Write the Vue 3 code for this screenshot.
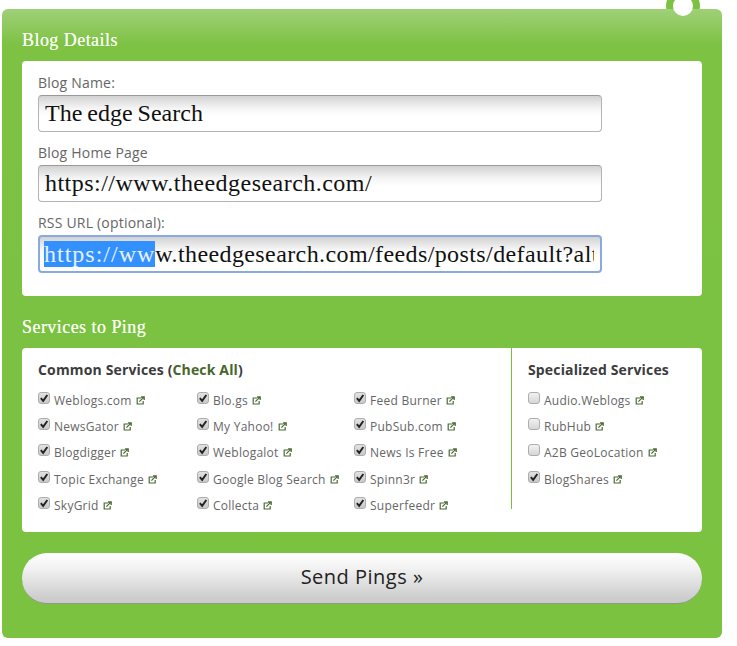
<script setup>
const fields = [
  { label: 'Blog Name:', value: 'The edge Search', tight: true },
  { label: 'Blog Home Page', value: 'https://www.theedgesearch.com/' },
  { label: 'RSS URL (optional):', selected: 'https://ww', value: 'w.theedgesearch.com/feeds/posts/default?alt=rss', focus: true }
]
const columns = [
  ['Weblogs.com', 'NewsGator', 'Blogdigger', 'Topic Exchange', 'SkyGrid'],
  ['Blo.gs', 'My Yahoo!', 'Weblogalot', 'Google Blog Search', 'Collecta'],
  ['Feed Burner', 'PubSub.com', 'News Is Free', 'Spinn3r', 'Superfeedr']
]
const special = [
  { name: 'Audio.Weblogs', on: false },
  { name: 'RubHub', on: false },
  { name: 'A2B GeoLocation', on: false },
  { name: 'BlogShares', on: true }
]
</script>

<template>
  <div class="page">
    <div class="panel">
      <div class="ring"></div>
      <div class="hole"></div>
      <h2 class="title">Blog Details</h2>
      <section class="card details">
        <div v-for="f in fields" :key="f.label" class="field">
          <div class="label">{{ f.label }}</div>
          <div class="input" :class="{ focus: f.focus, tight: f.tight }"><span class="value"><span v-if="f.selected" class="sel">{{ f.selected }}</span>{{ f.value }}</span></div>
        </div>
      </section>
      <h2 class="title">Services to Ping</h2>
      <section class="card services">
        <div class="common">
          <h3 class="sub">Common Services (<span class="check-all">Check All</span>)</h3>
          <div class="grid">
            <div v-for="(col, i) in columns" :key="i" class="col">
              <div v-for="name in col" :key="name" class="item">
                <span class="box"><svg viewBox="0 0 12 12" width="10" height="10"><path d="M2.2 6.2 L5 9.4 L10 2.4" fill="none" stroke="#222" stroke-width="2.3"/></svg></span>
                <span class="name">{{ name }}</span>
                <svg class="ext" viewBox="0 0 9 9" width="9" height="9"><path d="M5 2H1.2V8H7.2V5" fill="none" stroke="#4d6b35" stroke-width="1.2"/><path d="M3.4 5.6 L7.6 1.4 M5 1H8.2V4" fill="none" stroke="#4d6b35" stroke-width="1.3"/></svg>
              </div>
            </div>
          </div>
        </div>
        <div class="specialized">
          <h3 class="sub">Specialized Services</h3>
          <div class="col">
            <div v-for="s in special" :key="s.name" class="item">
              <span class="box" :class="{ off: !s.on }"><svg v-if="s.on" viewBox="0 0 12 12" width="10" height="10"><path d="M2.2 6.2 L5 9.4 L10 2.4" fill="none" stroke="#222" stroke-width="2.3"/></svg></span>
              <span class="name">{{ s.name }}</span>
              <svg class="ext" viewBox="0 0 9 9" width="9" height="9"><path d="M5 2H1.2V8H7.2V5" fill="none" stroke="#4d6b35" stroke-width="1.2"/><path d="M3.4 5.6 L7.6 1.4 M5 1H8.2V4" fill="none" stroke="#4d6b35" stroke-width="1.3"/></svg>
            </div>
          </div>
        </div>
      </section>
      <button class="send" type="button">Send Pings »</button>
    </div>
  </div>
</template>

<style>
html, body { margin: 0; background: #fff; overflow: hidden; }
</style>

<style scoped>
.page {
  width: 737px;
  height: 646px;
  padding: 9px 15px 8px 2px;
  box-sizing: border-box;
  overflow: hidden;
  isolation: isolate;
  font-family: "Open Sans", "DejaVu Sans", sans-serif;
}
.panel {
  position: relative;
  width: 720px;
  height: 629px;
  box-sizing: border-box;
  padding: 0 20px;
  border-radius: 6px;
  background: linear-gradient(#9fd078 0, #7dc243 36px, #7bc241 100%);
}
.ring {
  position: absolute;
  left: 664px;
  top: -20px;
  width: 34px;
  height: 34px;
  border-radius: 50%;
  background: #7cc242;
  z-index: -1;
}
.hole {
  position: absolute;
  left: 671px;
  top: -13px;
  width: 20px;
  height: 20px;
  border-radius: 50%;
  background: #fff;
}
.title {
  margin: 0;
  height: 52px;
  padding-top: 19px;
  box-sizing: border-box;
  font: 400 18px/24px "Liberation Serif", serif;
  letter-spacing: 0.45px;
  color: #f8fdf2;
  text-shadow: 0 0 0.5px #f8fdf2;
}
.card {
  background: #fff;
  border-radius: 4px;
}
.details {
  height: 235px;
  padding: 12px 16px 0;
  box-sizing: border-box;
}
.field { margin-bottom: 11px; height: 59px; }
.label {
  height: 22px;
  font-size: 14px;
  line-height: 20px;
  letter-spacing: 0.2px;
  color: #666;
}
.input {
  width: 564px;
  height: 37px;
  box-sizing: border-box;
  padding: 0 6px;
  border: 1px solid #b3b3b3;
  border-top-color: #999;
  border-radius: 4px;
  background: linear-gradient(#d2d2d2 0, #f4f4f4 12px, #fff 20px);
  font: 400 24px/35px "Liberation Serif", serif;
  letter-spacing: 0.47px;
  color: #111;
  white-space: nowrap;
}
.input.tight { letter-spacing: 0; word-spacing: -1px; }
.value { display: block; overflow: hidden; }
.input.focus {
  height: 38px;
  border: 2px solid #8aa9e0;
  padding: 0 6px 0 4px;
  line-height: 34px;
  letter-spacing: 0.4px;
}
.sel { background: #3390ff; color: #e6f0ff; letter-spacing: 1px; }
.services {
  height: 184px;
  display: flex;
}
.common {
  width: 490px;
  height: 161px;
  box-sizing: border-box;
  padding: 12px 0 0 16px;
  border-right: 1px solid #7dbb45;
}
.specialized {
  padding: 12px 0 0 16px;
}
.sub {
  margin: 0 0 9px;
  font: 700 14px/20px "Open Sans", sans-serif;
  letter-spacing: 0.15px;
  white-space: nowrap;
  color: #3c3c3c;
}
.check-all { color: #48662c; }
.grid {
  display: grid;
  grid-template-columns: 159px 157px 1fr;
}
.col { display: flex; flex-direction: column; }
.item {
  height: 26.3px;
  display: flex;
  align-items: center;
  font-size: 12px;
  letter-spacing: 0.25px;
  color: #666;
  padding-bottom: 4px;
  box-sizing: border-box;
}
.box {
  width: 12px;
  height: 12px;
  margin-right: 4px;
  margin-top: -5px;
  flex: none;
  box-sizing: border-box;
  border: 1px solid #adadad;
  border-radius: 3px;
  background: linear-gradient(#e2e2e2, #c9c9c9);
  display: flex;
  align-items: center;
  justify-content: center;
}
.box.off { background: linear-gradient(#f2f2f2, #d6d6d6); }
.box svg { flex: none; }
.ext { margin-left: 4px; flex: none; }
.send {
  display: block;
  width: 680px;
  height: 51px;
  margin-top: 21px;
  padding: 0 0 2px;
  border: 0;
  border-bottom: 1px solid #8e9a88;
  border-radius: 25px;
  background: linear-gradient(#fff 0, #f2f2f2 30%, #cdcdcd 90%, #cbcbcb 100%);
  font: 400 20px/40px "Open Sans", sans-serif;
  letter-spacing: 0.5px;
  color: #222;
  text-align: center;
}
</style>
